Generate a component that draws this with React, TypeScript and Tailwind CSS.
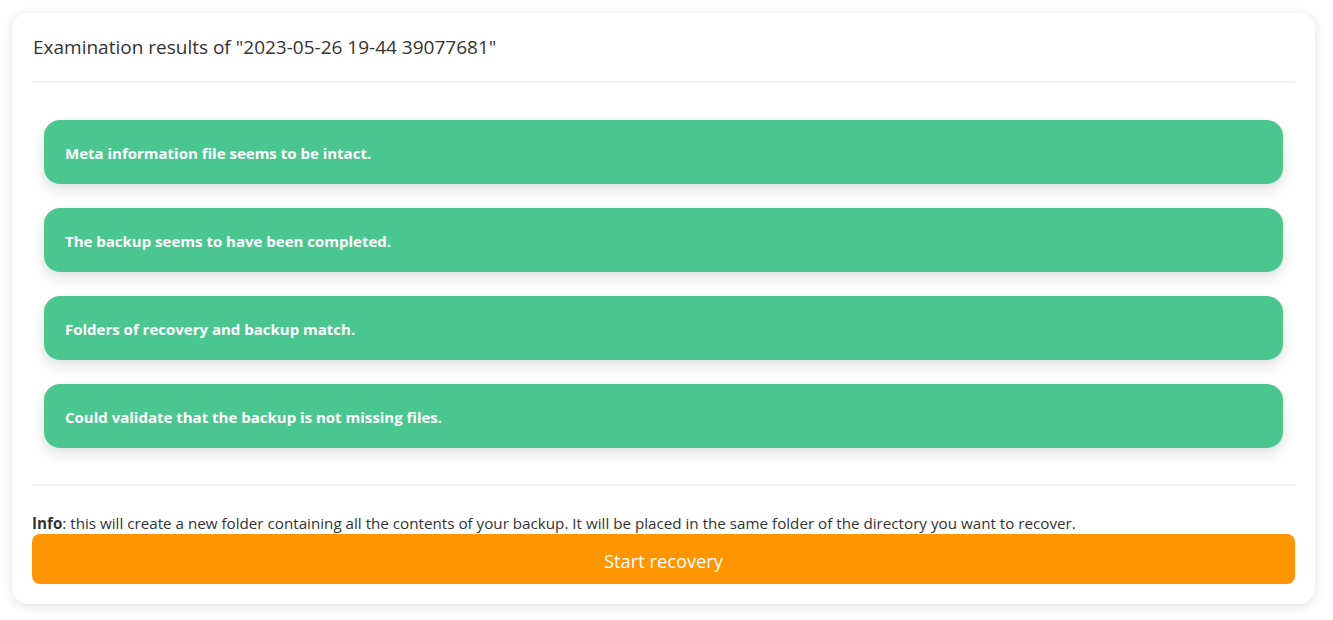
const checks = [
  "Meta information file seems to be intact.",
  "The backup seems to have been completed.",
  "Folders of recovery and backup match.",
  "Could validate that the backup is not missing files.",
];

export default function App() {
  return (
    <div
      className="min-h-[620px] bg-white pl-3 pt-[13px] text-[#333]"
      style={{ fontFamily: '"Open Sans", "Noto Sans", sans-serif' }}
    >
      <div className="w-[1303px] rounded-2xl bg-white px-5 pb-5 shadow-[0_2px_12px_rgba(0,0,0,0.12)]">
        <div className="flex h-[70px] items-center border-b-2 border-[#f2f2f2] pl-px text-[19px] text-[#333]">
          Examination results of "2023-05-26 19-44 39077681"
        </div>

        <div className="flex flex-col gap-6 px-3 pb-9 pt-[37px]">
          {checks.map((text) => (
            <div
              key={text}
              className="flex h-16 items-center rounded-2xl bg-[#4ac78f] px-[21px] pt-0.5 text-[15px] font-bold text-white shadow-[0_6px_14px_rgba(0,0,0,0.12)]"
            >
              {text}
            </div>
          ))}
        </div>

        <div className="border-t-2 border-[#f2f2f2] pt-[26px]">
          <p className="text-[15.2px] leading-[22px] text-[#333]">
            <span className="font-bold">Info</span>: this will create a new
            folder containing all the contents of your backup. It will be placed
            in the same folder of the directory you want to recover.
          </p>
          <button className="flex h-[50px] w-full items-center justify-center rounded-lg bg-[#ff9500] pt-1 text-[18.3px] text-white">
            Start recovery
          </button>
        </div>
      </div>
    </div>
  );
}
